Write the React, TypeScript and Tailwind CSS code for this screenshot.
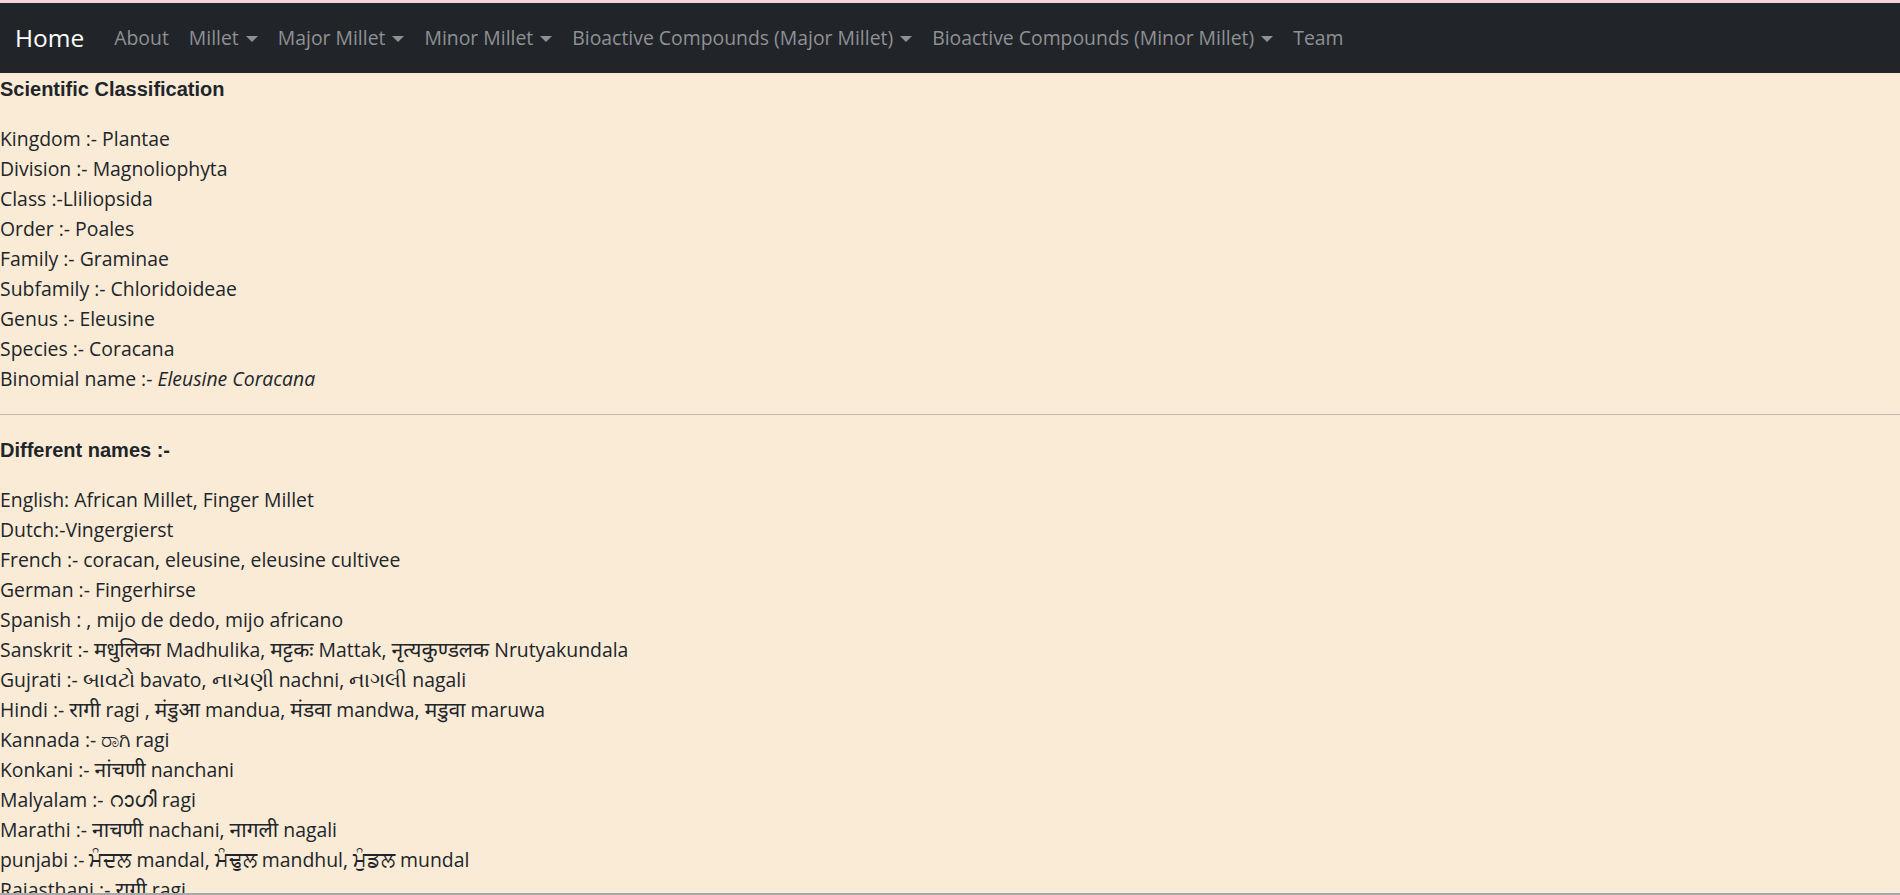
import React from 'react';

const navItems: { label: string; dropdown?: boolean }[] = [
  { label: 'About' },
  { label: 'Millet', dropdown: true },
  { label: 'Major Millet', dropdown: true },
  { label: 'Minor Millet', dropdown: true },
  { label: 'Bioactive Compounds (Major Millet)', dropdown: true },
  { label: 'Bioactive Compounds (Minor Millet)', dropdown: true },
  { label: 'Team' },
];

const classification = [
  'Kingdom :- Plantae',
  'Division :- Magnoliophyta',
  'Class :-Lliliopsida',
  'Order :- Poales',
  'Family :- Graminae',
  'Subfamily :- Chloridoideae',
  'Genus :- Eleusine',
  'Species :- Coracana',
];

const names = [
  'English: African Millet, Finger Millet',
  'Dutch:-Vingergierst',
  'French :- coracan, eleusine, eleusine cultivee',
  'German :- Fingerhirse',
  'Spanish : , mijo de dedo, mijo africano',
  'Sanskrit :- मधुलिका Madhulika, मट्टकः Mattak, नृत्यकुण्डलक Nrutyakundala',
  'Gujrati :- બાવટો bavato, નાચણી nachni, નાગલી nagali',
  'Hindi :- रागी ragi , मंडुआ mandua, मंडवा mandwa, मडुवा maruwa',
  'Kannada :- ರಾಗಿ ragi',
  'Konkani :- नांचणी nanchani',
  'Malyalam :- റാഗി ragi',
  'Marathi :- नाचणी nachani, नागली nagali',
  'punjabi :- ਮੰਦਲ mandal, ਮੰਢੁਲ mandhul, ਮੁੰਡਲ mundal',
  'Rajasthani :- रागी ragi',
  'Tamil :- கேழ்வரகு kelvaragu',
  'Telugu :- రాగులు ragulu',
];

// indic words render a bit larger, like the original system font does
const renderLine = (line: string) =>
  line.split(/([\u0900-\u0DFF]+)/).map((part, i) =>
    i % 2 === 1 ? (
      <span key={i} className="text-[21px] leading-none">
        {part}
      </span>
    ) : (
      part
    )
  );

const Caret = () => (
  <span className="ml-[7px] inline-block align-[3px] border-x-[6px] border-t-[6px] border-x-transparent border-t-current" />
);

const App: React.FC = () => {
  return (
    <div className="min-h-screen bg-[#faebd7] border-t-[3px] border-[#f6d3da] text-[#212529] text-[19.4px] leading-[30px] [font-family:'Open_Sans','Noto_Sans',sans-serif]">
      {/* Navbar */}
      <nav className="bg-[#212529] h-[70px] flex items-center px-[15px]">
        <a className="text-white text-[24.5px] leading-[38px] mr-[20px]">Home</a>
        <ul className="flex items-center">
          {navItems.map((item) => (
            <li key={item.label} className="px-[10px] py-[10px] text-[#8f9194] whitespace-nowrap">
              {item.label}
              {item.dropdown && <Caret />}
            </li>
          ))}
        </ul>
      </nav>

      <div className="pt-[1px]">
        {/* Scientific classification */}
        <p className="mb-[20px] text-[20px] font-bold [font-family:'Liberation_Sans',Arial,sans-serif]">Scientific Classification</p>
        <p className="mb-[20px]">
          {classification.map((line) => (
            <React.Fragment key={line}>
              {line}
              <br />
            </React.Fragment>
          ))}
          Binomial name :- <i>Eleusine Coracana</i>
        </p>

        <hr className="my-[20px] border-t border-[#212529] opacity-25" />

        {/* Different names */}
        <p className="mb-[20px] text-[20px] font-bold [font-family:'Liberation_Sans',Arial,sans-serif]">Different names :-</p>
        <p className="mb-[20px]">
          {names.map((line, i) => (
            <React.Fragment key={line}>
              {renderLine(line)}
              {i < names.length - 1 && <br />}
            </React.Fragment>
          ))}
        </p>
      </div>

      <div className="fixed bottom-0 left-0 right-0 h-[2px] bg-[#a9a9a9]" />
    </div>
  );
};

export default App;
